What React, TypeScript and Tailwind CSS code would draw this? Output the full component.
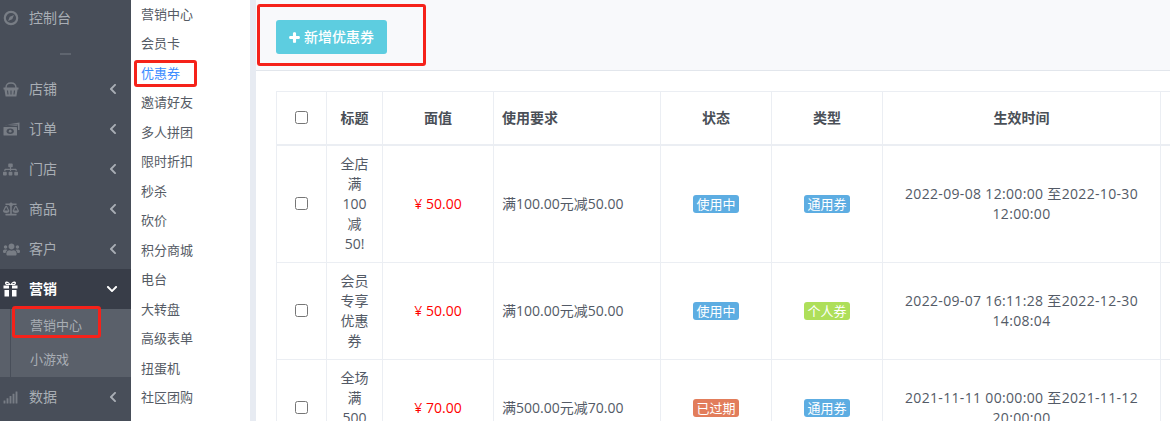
import React from "react";
import { FaSitemap, FaBalanceScale, FaUsers, FaSignal, FaPlus, FaChevronLeft, FaChevronDown } from "react-icons/fa";

const font = { fontFamily: '"Open Sans","Noto Sans CJK SC",sans-serif' };

const Compass = () => (
  <svg width="16" height="16" viewBox="0 0 16 16" fill="none">
    <circle cx="8" cy="8" r="6.2" stroke="currentColor" strokeWidth="2.2" />
    <path d="M11 5 L9.2 9.2 L5 11 L6.8 6.8 Z" fill="currentColor" />
  </svg>
);

const Basket = () => (
  <svg width="16" height="15" viewBox="0 0 16 15" fill="none">
    <path d="M3 6 C3 2 5 1 8 1 C11 1 13 2 13 6" stroke="currentColor" strokeWidth="1.4" />
    <path d="M0.5 5.5 H15.5 V7.5 H14.6 L13.4 14.5 H2.6 L1.4 7.5 H0.5 Z" fill="currentColor" />
    <path d="M4.5 8.5 L5 12.5 M8 8.5 V12.5 M11.5 8.5 L11 12.5" stroke="#484e59" strokeWidth="1.1" />
  </svg>
);

const Money = () => (
  <svg width="17" height="14" viewBox="0 0 17 14" fill="none">
    <path d="M4 2.5 L16.5 0.5 V8 H15 V2.5 Z" fill="currentColor" />
    <path d="M2.5 4 L14.5 2.8 V3.8 H2.5 Z" fill="currentColor" />
    <rect x="0.5" y="5" width="13.5" height="8.5" rx="0.6" fill="currentColor" />
    <ellipse cx="7.2" cy="9.2" rx="3.6" ry="2.7" fill="#484e59" />
    <circle cx="7.2" cy="9.2" r="1.4" fill="currentColor" />
  </svg>
);

const Gift = () => (
  <svg width="15" height="16" viewBox="0 0 15 16" fill="currentColor">
    <path d="M3 0.5 C5 0 6.6 1.6 7.5 3.5 C8.4 1.6 10 0 12 0.5 C13.6 1 13.2 3.4 11.8 4 H3.2 C1.8 3.4 1.4 1 3 0.5 Z M3.8 2 C3.2 2 3.2 2.8 4 3 H6 C5.4 2.3 4.6 2 3.8 2 Z M11.2 2 C10.4 2 9.6 2.3 9 3 H11 C11.8 2.8 11.8 2 11.2 2 Z" fillRule="evenodd" />
    <rect x="0.5" y="4.5" width="5.5" height="3" />
    <rect x="9" y="4.5" width="5.5" height="3" />
    <rect x="1.5" y="9" width="4.5" height="6.5" />
    <rect x="9" y="9" width="4.5" height="6.5" />
  </svg>
);

function Item({ icon, label, top = false }: { icon: React.ReactNode; label: string; top?: boolean }) {
  return (
    <div className="flex h-[40px] items-center pl-[2px] pr-[12px] text-[#a9aeb5]">
      <span className="flex w-[27px] justify-start pl-[1px] text-[#787d85]">{icon}</span>
      <span className="pb-[2px] text-[14px]">{label}</span>
      {!top && <FaChevronLeft className="ml-auto text-[12px] text-[#a9aeb5]" />}
    </div>
  );
}

const sub = ["营销中心","会员卡","优惠券","邀请好友","多人拼团","限时折扣","秒杀","砍价","积分商城","电台","大转盘","高级表单","扭蛋机","社区团购"];

function Badge({ text, color }: { text: string; color: string }) {
  return <span className={`inline-flex h-[18px] w-[46px] items-center justify-center rounded-[3px] text-[13px] leading-[18px] text-white ${color}`}>{text}</span>;
}

const rows = [
  { title: "全店满100减50!", price: "¥ 50.00", req: "满100.00元减50.00", status: "使用中", sc: "bg-[#5dade2]", type: "通用券", tc: "bg-[#5dade2]", time: "2022-09-08 12:00:00 至2022-10-30 12:00:00" },
  { title: "会员专享优惠券", price: "¥ 50.00", req: "满100.00元减50.00", status: "使用中", sc: "bg-[#5dade2]", type: "个人券", tc: "bg-[#aedf5a]", time: "2022-09-07 16:11:28 至2022-12-30 14:08:04" },
  { title: "全场满500减70", price: "¥ 70.00", req: "满500.00元减70.00", status: "已过期", sc: "bg-[#e27d5b]", type: "通用券", tc: "bg-[#5dade2]", time: "2021-11-11 00:00:00 至2021-11-12 20:00:00" },
];

const th = "h-[53px] border border-b-2 border-[#ebeef3] px-2 text-center text-[14px] font-bold text-[#4a4f57]";
const td = "border border-[#ebeef3] py-2 px-2 text-center align-middle text-[14px] leading-5 text-[#535a66]";

export default function App() {
  return (
    <div className="relative flex h-[421px] w-[1170px] overflow-hidden bg-white" style={font}>
      <aside className="h-full w-[131px] shrink-0 bg-[#484e59]">
        <div className="-mt-[2px]"><Item top icon={<Compass />} label="控制台" /></div>
        <div className="flex h-[31px] items-center justify-center pr-[1px]">
          <span className="h-[2px] w-[11px] bg-[#5f656f]" />
        </div>
        <div>
          <Item icon={<Basket />} label="店铺" />
          <Item icon={<Money />} label="订单" />
          <Item icon={<FaSitemap className="text-[15px]" />} label="门店" />
          <Item icon={<FaBalanceScale className="text-[16px]" />} label="商品" />
          <Item icon={<FaUsers className="text-[17px]" />} label="客户" />
        </div>
        <div className="flex h-[40px] items-center bg-[#383d48] pl-[3px] pr-[13px] font-bold text-white">
          <span className="flex w-[26px]"><Gift /></span>
          <span className="pb-[2px] text-[14px]">营销</span>
          <FaChevronDown className="ml-auto text-[12px]" />
        </div>
        <div className="h-[68px] bg-[#5a606a] pl-[10px]">
          <div className="h-full border-l border-[#484e59] pl-[19px] text-[13px] text-[#a9aeb5]">
            <div className="flex h-[34px] items-center pb-[1px]">营销中心</div>
            <div className="flex h-[34px] items-center">小游戏</div>
          </div>
        </div>
        <Item icon={<FaSignal className="text-[15px]" />} label="数据" />
      </aside>

      <nav className="h-full w-[119px] shrink-0 bg-white pl-[10px] text-[13px] text-[#555b65]">
        <div className="-mt-[0.5px]">
          {sub.map((s) => (
            <div key={s} className={`flex h-[29.5px] items-center ${s === "优惠券" ? "text-[#3c8dff]" : ""}`}>{s}</div>
          ))}
        </div>
      </nav>

      <div className="h-full w-[6px] shrink-0 bg-[#e7ebf2]" />

      <main className="min-w-0 flex-1">
        <div className="h-[71px] border-b border-[#e2e6ec] bg-[#f8f9fb] pl-[20px] pt-[20px]">
          <button className="flex h-[34px] w-[111px] items-center justify-center gap-[4px] rounded-[3px] bg-[#5dcde0] text-[14px] font-medium text-white">
            <FaPlus className="stroke-[50px] text-[11px]" /><span className="pb-[2px]">新增优惠券</span>
          </button>
        </div>
        <div className="pl-[20px] pt-[20px]">
          <table className="w-[960px] table-fixed border-collapse">
            <colgroup>
              <col className="w-[50px]" /><col className="w-[56px]" /><col className="w-[111px]" /><col className="w-[167px]" />
              <col className="w-[111px]" /><col className="w-[111px]" /><col className="w-[278px]" /><col className="w-[76px]" />
            </colgroup>
            <thead>
              <tr>
                <th className={th}><input type="checkbox" className="mx-auto block" /></th>
                <th className={th}>标题</th>
                <th className={th}>面值</th>
                <th className={`${th} !text-left`}>使用要求</th>
                <th className={th}>状态</th>
                <th className={th}>类型</th>
                <th className={th}>生效时间</th>
                <th className={th} />
              </tr>
            </thead>
            <tbody>
              {rows.map((r) => (
                <tr key={r.time}>
                  <td className={td}><input type="checkbox" className="mx-auto block" /></td>
                  <td className={`${td} !px-[12px]`}>{r.title}</td>
                  <td className={`${td} !text-[#ff0000]`}>{r.price}</td>
                  <td className={`${td} !text-left`}>{r.req}</td>
                  <td className={td}><Badge text={r.status} color={r.sc} /></td>
                  <td className={td}><Badge text={r.type} color={r.tc} /></td>
                  <td className={`${td} tracking-[0.33px]`}>{r.time}</td>
                  <td className={td} />
                </tr>
              ))}
            </tbody>
          </table>
        </div>
      </main>

      <div className="pointer-events-none absolute left-[134px] top-[60px] h-[27px] w-[63px] rounded-[3px] border-[3px] border-[#f5221a]" />
      <div className="pointer-events-none absolute left-[12px] top-[306px] h-[32px] w-[89px] rounded-[3px] border-[3px] border-[#f5221a]" />
      <div className="pointer-events-none absolute left-[257px] top-[4px] h-[62px] w-[169px] rounded-[3px] border-[3px] border-[#f5221a]" />
    </div>
  );
}
